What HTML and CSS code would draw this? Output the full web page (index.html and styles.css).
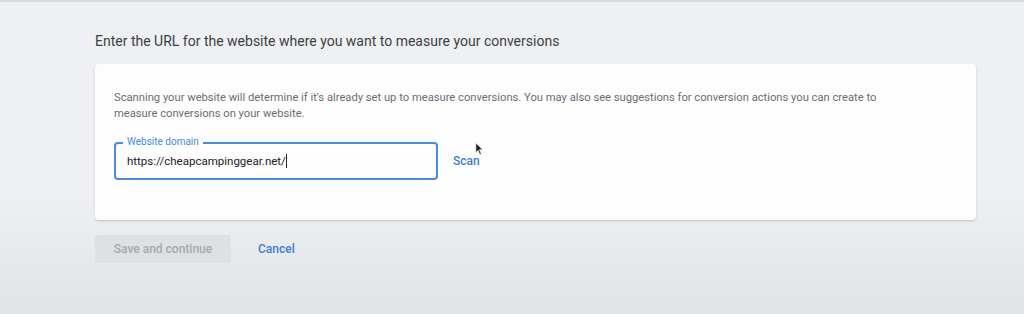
FILE: index.html
```html
<!DOCTYPE html>
<html lang="en">

<head>
    <meta charset="UTF-8">
    <meta name="viewport" content="width=device-width, initial-scale=1.0">
    <title>Conversion setup</title>
    <link rel="stylesheet" href="styles.css">
</head>

<body>
    <div class="page">
        <h1 class="page-title">Enter the URL for the website where you want to measure your conversions</h1>
        <div class="card">
            <p class="card-text">
                Scanning your website will determine if it's already set up to measure conversions. You may also see suggestions for conversion actions you can create to measure conversions on your website.
            </p>
            <div class="field-row">
                <div class="field">
                    <span class="field-label">Website domain</span>
                    <span class="field-value">https://cheapcampinggear.net/<span class="caret"></span></span>
                </div>
                <a class="link-button scan">Scan</a>
                <!-- mouse pointer -->
                <svg class="pointer" viewBox="0 0 12 18" width="9" height="14">
                    <path d="M1 1 L1 14 L4 11 L6.5 16.5 L8.5 15.5 L6 10 L10.5 10 Z" fill="#1f1f1f" stroke="#fff" stroke-width="1" />
                </svg>
            </div>
        </div>
        <div class="actions">
            <button class="btn-primary" disabled>Save and continue</button>
            <a class="link-button">Cancel</a>
        </div>
    </div>
</body>

</html>
```

FILE: styles.css
```css
* {
    margin: 0;
    padding: 0;
    box-sizing: border-box;
}

body,
html {
    height: 100%;
    overflow: hidden;
    font-family: Roboto, 'Liberation Sans', sans-serif;
}

body {
    background: linear-gradient(180deg, #eff0f3 0%, #eff0f3 60%, #e2e3e6 100%);
    border-top: 2px solid #d9dadd;
}

.page {
    padding: 30px 0 0 95px;
    width: 976px;
}

.page-title {
    font-size: 14px;
    font-weight: 400;
    color: #3c4043;
    line-height: 18px;
    margin-bottom: 14px;
}

.card {
    background: #fdfdfd;
    border-radius: 4px;
    box-shadow: 0 1px 2px rgba(60, 64, 67, 0.25);
    padding: 26px 20px 40px 19px;
}

.card-text {
    font-size: 11.2px;
    line-height: 16px;
    color: #6b6e72;
    max-width: 790px;
}

.field-row {
    position: relative;
    display: flex;
    align-items: center;
    gap: 15px;
    margin-top: 20px;
}

.field {
    position: relative;
    width: 324px;
    height: 38px;
    border: 2px solid #4a8ad8;
    border-radius: 4px;
    display: flex;
    align-items: center;
    padding-left: 11px;
}

.field-label {
    position: absolute;
    top: -8px;
    left: 7px;
    padding: 0 4px;
    background: #fdfdfd;
    font-size: 10px;
    line-height: 12px;
    color: #4a8ad8;
}

.field-value {
    font-size: 11.5px;
    color: #202124;
}

.caret {
    display: inline-block;
    width: 1px;
    height: 14px;
    background: #202124;
    vertical-align: -3px;
}

.link-button {
    font-size: 12px;
    font-weight: 500;
    color: #3d7fd0;
    cursor: pointer;
}

.pointer {
    position: absolute;
    left: 361px;
    top: 0;
}

.actions {
    display: flex;
    align-items: center;
    gap: 27px;
    margin-top: 15px;
}

.btn-primary {
    width: 136px;
    height: 28px;
    border: none;
    border-radius: 3px;
    background: #dfe0e2;
    color: #a6a9ad;
    font-family: inherit;
    font-size: 12px;
    font-weight: 500;
}
```
